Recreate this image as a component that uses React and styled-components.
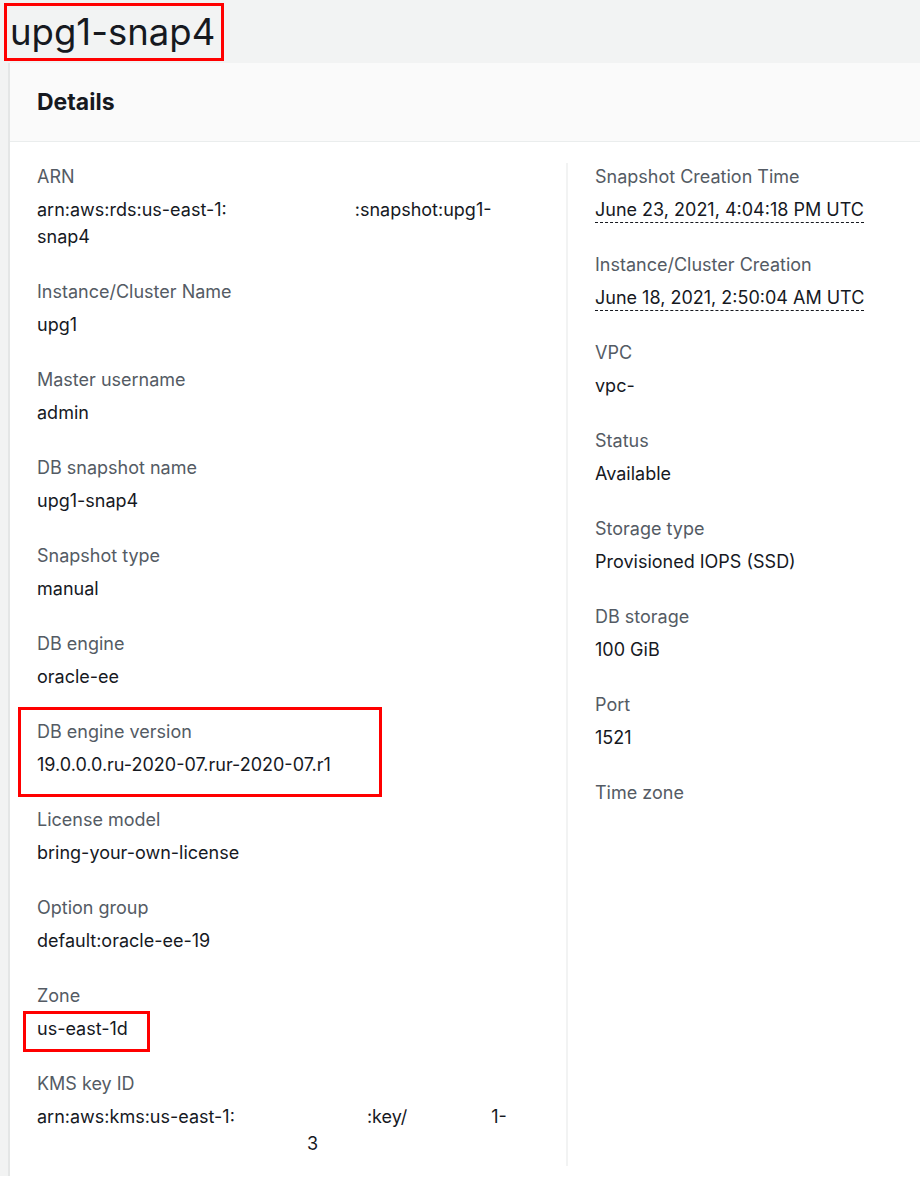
import React from 'react';
import styled, { createGlobalStyle } from 'styled-components';

const GlobalStyle = createGlobalStyle`
  html, body {
    margin: 0;
    padding: 0;
    background: #ffffff;
  }
  body {
    font-family: Inter, Roboto, "Liberation Sans", Arial, sans-serif;
    color: #16191f;
  }
`;

// Page shell with the console grey background
const Page = styled.div`
  width: 920px;
  background: #f2f3f3;
  overflow: hidden;
`;

const TitleBar = styled.div`
  height: 63px;
  display: flex;
  align-items: center;
  padding-left: 4px;
  box-sizing: border-box;
`;

const Title = styled.h1`
  margin: 0;
  display: inline-block;
  font-size: 36.5px;
  font-weight: 400;
  line-height: 52px;
  padding: 0 6px 0 3px;
  border: 3px solid #ff0000;
  color: #16191f;
`;

const Card = styled.section`
  margin-left: 8px;
  border-left: 2px solid #e4e6e6;
  background: #ffffff;
`;

const CardHeader = styled.div`
  height: 78px;
  display: flex;
  align-items: center;
  padding-left: 27px;
  background: #fafafa;
  border-bottom: 1px solid #eaeded;
`;

const CardTitle = styled.h2`
  margin: 0;
  font-size: 23px;
  font-weight: 700;
  color: #16191f;
`;

const CardBody = styled.div`
  display: grid;
  grid-template-columns: 556px 1fr;
  padding-top: 21px;
  padding-bottom: 10px;
`;

const Column = styled.div`
  display: flex;
  flex-direction: column;
  gap: 28px;
  padding: 0 28px 0 27px;
  border-left: ${(p) => (p.$divided ? '2px solid #f2f3f3' : 'none')};
  min-height: 1003px;
`;

const Field = styled.div`
  position: relative;
  display: flex;
  flex-direction: column;
  gap: 6px;
  font-size: 18px;
  line-height: 27px;
`;

const Label = styled.div`
  color: #545b64;
`;

const Value = styled.div`
  color: #16191f;
  min-height: 27px;
`;

const Dated = styled.span`
  border-bottom: 1px dashed #16191f;
  padding-bottom: 2px;
`;

const Gap = styled.span`
  display: inline-block;
  width: ${(p) => p.$w}px;
`;

// red annotation boxes drawn over the content
const Mark = styled.div`
  position: absolute;
  left: ${(p) => p.$l}px;
  top: ${(p) => p.$t}px;
  width: ${(p) => p.$w}px;
  height: ${(p) => p.$h}px;
  border: 3px solid #ff0000;
  box-sizing: border-box;
  pointer-events: none;
`;

const leftFields = [
  {
    label: 'ARN',
    value: (
      <>
        arn:aws:rds:us-east-1:<Gap $w={128} />:snapshot:upg1-
        <br />
        snap4
      </>
    ),
  },
  { label: 'Instance/Cluster Name', value: 'upg1' },
  { label: 'Master username', value: 'admin' },
  { label: 'DB snapshot name', value: 'upg1-snap4' },
  { label: 'Snapshot type', value: 'manual' },
  { label: 'DB engine', value: 'oracle-ee' },
  {
    label: 'DB engine version',
    value: '19.0.0.0.ru-2020-07.rur-2020-07.r1',
    mark: { l: -19, t: -11, w: 364, h: 90 },
  },
  { label: 'License model', value: 'bring-your-own-license' },
  { label: 'Option group', value: 'default:oracle-ee-19' },
  {
    label: 'Zone',
    value: 'us-east-1d',
    mark: { l: -14, t: 29, w: 127, h: 41 },
  },
  {
    label: 'KMS key ID',
    value: (
      <>
        arn:aws:kms:us-east-1:<Gap $w={132} />:key/<Gap $w={84} />1-
        <br />
        <Gap $w={270} />3
      </>
    ),
  },
];

const rightFields = [
  { label: 'Snapshot Creation Time', value: <Dated>June 23, 2021, 4:04:18 PM UTC</Dated> },
  { label: 'Instance/Cluster Creation', value: <Dated>June 18, 2021, 2:50:04 AM UTC</Dated> },
  { label: 'VPC', value: 'vpc-' },
  { label: 'Status', value: 'Available' },
  { label: 'Storage type', value: 'Provisioned IOPS (SSD)' },
  { label: 'DB storage', value: '100 GiB' },
  { label: 'Port', value: '1521' },
  { label: 'Time zone', value: '' },
];

const renderField = (f) => (
  <Field key={f.label}>
    <Label>{f.label}</Label>
    <Value>{f.value}</Value>
    {f.mark && <Mark $l={f.mark.l} $t={f.mark.t} $w={f.mark.w} $h={f.mark.h} />}
  </Field>
);

const App = () => {
  return (
    <>
      <GlobalStyle />
      <Page>
        <TitleBar>
          <Title>upg1-snap4</Title>
        </TitleBar>
        <Card>
          <CardHeader>
            <CardTitle>Details</CardTitle>
          </CardHeader>
          <CardBody>
            <Column>{leftFields.map(renderField)}</Column>
            <Column $divided>{rightFields.map(renderField)}</Column>
          </CardBody>
        </Card>
      </Page>
    </>
  );
};

export default App;
